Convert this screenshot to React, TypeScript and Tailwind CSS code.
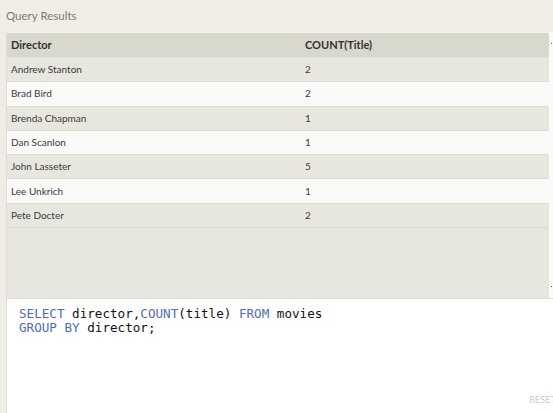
import React from "react";

const rows: [string, string][] = [
  ["Andrew Stanton", "2"],
  ["Brad Bird", "2"],
  ["Brenda Chapman", "1"],
  ["Dan Scanlon", "1"],
  ["John Lasseter", "5"],
  ["Lee Unkrich", "1"],
  ["Pete Docter", "2"],
];

export default function App() {
  return (
    <div
      className="w-[553px] h-[413px] bg-[#efede6] overflow-hidden flex flex-col"
      style={{ fontFamily: "Lato, 'Noto Sans', sans-serif" }}
    >
      <div className="h-[32px] pl-[6px] pt-[8px] text-[11.5px] text-[#7a7a74] leading-[16px]">
        Query Results
      </div>
      <div className="flex h-[266px] ml-[6px] border-l border-[#dfddd5]">
        <div className="w-[542px] bg-[#e8e7df] flex flex-col border-t border-[#f4f3ee]">
          <div className="flex h-[25px] shrink-0 items-center bg-[#d8d8cc] border-b border-[#e2e1d9] text-[11px] font-bold text-[#333]">
            <div className="w-[298px] pl-[4px]">Director</div>
            <div>COUNT(Title)</div>
          </div>
          {rows.map(([d, c], i) => (
            <div
              key={d}
              className={
                "flex h-[24.3px] shrink-0 items-center border-b border-[#dddcd4] text-[10px] text-[#3a3a3a] " +
                (i % 2 === 0 ? "bg-[#e8e7df]" : "bg-[#f9f9f8]")
              }
            >
              <div className="w-[298px] pl-[4px]">{d}</div>
              <div>{c}</div>
            </div>
          ))}
        </div>
        <div className="w-[4px] bg-[#fafaf8] relative">
          <div className="absolute left-[2px] top-[11px] w-[1px] h-[1px] bg-[#555]" />
          <div className="absolute left-[2px] top-[254px] w-[1px] h-[1px] bg-[#555]" />
        </div>
      </div>
      <div className="flex-1 ml-[6px] border-l border-t border-[#dfddd5] bg-white relative">
        <pre
          className="pl-[12px] pt-[8px] text-[12.6px] leading-[14px] text-[#111]"
          style={{ fontFamily: "'DejaVu Sans Mono', monospace" }}
        >
          <span className="text-[#4d6fb0]">SELECT</span> director,
          <span className="text-[#4d6fb0]">COUNT</span>(title){" "}
          <span className="text-[#4d6fb0]">FROM</span> movies{"\n"}
          <span className="text-[#4d6fb0]">GROUP BY</span> director;
        </pre>
        <div className="absolute left-[522px] top-[94px] text-[9px] text-[#c8c8c8] tracking-[0.2px]">
          RESET
        </div>
      </div>
    </div>
  );
}
